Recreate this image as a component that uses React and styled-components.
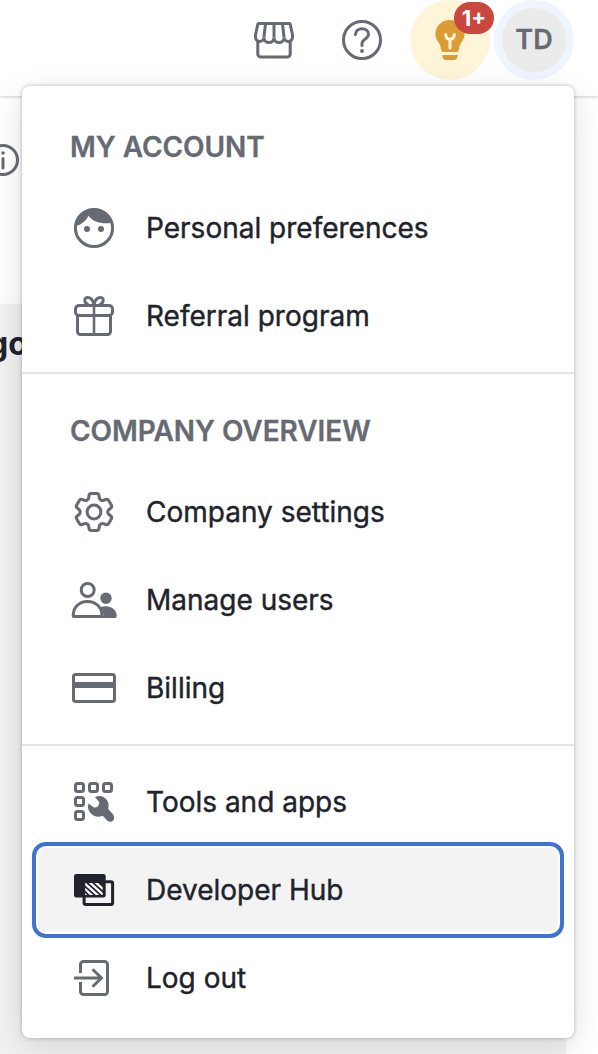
import React from 'react';
import styled, {createGlobalStyle} from 'styled-components';

const GlobalStyle = createGlobalStyle`
  body {
    margin: 0;
    overflow: hidden;
    background: #fff;
    font-family: Inter, "Liberation Sans", sans-serif;
    color: #20232c;
  }
`;

const StoreIcon = () => (
  <Icon>
    <path d="M9 7.500h30q1 0 1.300 1l2.200 10.500v2a4.200 4.200 0 0 1-8.400 0.500a5 5 0 0 1-10.100 0a5 5 0 0 1-10.100 0a4.200 4.200 0 0 1-8.400-0.500v-2L7.700 8.500q.3-1 1.300-1z"/>
    <path d="M15.500 8l-1.600 13.500M24 8v13.500M32.500 8l1.600 13.500"/>
    <path d="M7.800 25v13a3 3 0 0 0 3 3h26.400a3 3 0 0 0 3-3V25"/>
  </Icon>
);

const HelpIcon = () => (
  <Icon>
    <circle cx="24" cy="24" r="18.500"/>
    <path d="M17.500 18.500c.2-3.600 3-5.800 6.500-5.800c3.600 0 6.500 2.200 6.500 5.600c0 4.800-6.500 4.700-6.500 9.500v1.700" strokeLinecap="round"/>
    <circle cx="24" cy="35" r="1.900" fill="currentColor" stroke="none"/>
  </Icon>
);

const BulbIcon = () => (
  <Icon>
    <path
      d="M24 4C15.500 4 9.400 10.200 9.400 18.500c0 5.500 4.600 8 5.400 13.500c.3 2.300.8 4 2.200 4h14c1.400 0 1.900-1.700 2.200-4c.8-5.500 5.400-8 5.400-13.500C38.600 10.200 32.500 4 24 4z"
      fill="currentColor" stroke="none"
    />
    <path d="M16.300 39h15.400c0 3-1.500 5-4 5h-7.400c-2.500 0-4-2-4-5z" fill="currentColor" stroke="none"/>
    <path d="M19.800 18.500c0 3 1.600 4.700 4.200 4.700s4.200-1.700 4.200-4.700M24 23v9" stroke="#fef5d9" strokeWidth="3" strokeLinecap="round"/>
  </Icon>
);

const FaceIcon = () => (
  <Icon>
    <circle cx="24" cy="24" r="18.600"/>
    <path d="M5.400 22.300C11.500 20.500 16 17 18.400 11.700C23 18.300 32.500 20.300 42 18.700C39.500 10.500 33 5.400 24 5.400S5.400 12.500 5.400 22.300z" fill="currentColor" stroke="none"/>
    <circle cx="17" cy="25" r="3" fill="currentColor" stroke="none"/>
    <circle cx="31" cy="25" r="3" fill="currentColor" stroke="none"/>
  </Icon>
);

const GiftIcon = () => (
  <Icon>
    <rect x="5.500" y="13.500" width="37" height="10" rx="3.500"/>
    <path d="M7.500 24v15.500a3 3 0 0 0 3 3h27a3 3 0 0 0 3-3V24"/>
    <path d="M24 12v30" strokeWidth="2.600"/>
    <path d="M24 12.500C23 8 20.500 5.400 17.500 5.400c-2.200 0-3 1.600-2.600 3.600c.4 2.200 1.600 3 3.600 3.500M24 12.500C25 8 27.500 5.400 30.500 5.400c2.200 0 3 1.600 2.600 3.600c-.4 2.200-1.600 3-3.600 3.500"/>
  </Icon>
);

const GearIcon = () => (
  <Icon>
    <path
      transform="translate(-.6 -.6) scale(2.050)"
      strokeWidth="1.500"
      d="M9.594 3.940c.09-.542.56-.94 1.110-.94h2.593c.55 0 1.020.398 1.110.94l.213 1.281c.063.374.313.686.645.87.074.04.147.083.22.127.325.196.72.257 1.075.124l1.217-.456a1.125 1.125 0 0 1 1.370.49l1.296 2.247a1.125 1.125 0 0 1-.26 1.431l-1.003.827c-.293.241-.438.613-.43.992a7.723 7.723 0 0 1 0 .255c-.008.378.137.75.43.991l1.004.827c.424.35.534.955.26 1.430l-1.298 2.247a1.125 1.125 0 0 1-1.369.491l-1.217-.456c-.355-.133-.75-.072-1.076.124a6.470 6.470 0 0 1-.22.128c-.331.183-.581.495-.644.869l-.213 1.281c-.09.543-.56.94-1.110.94h-2.594c-.55 0-1.019-.398-1.110-.94l-.213-1.281c-.062-.374-.312-.686-.644-.87a6.520 6.520 0 0 1-.22-.127c-.325-.196-.72-.257-1.076-.124l-1.217.456a1.125 1.125 0 0 1-1.369-.49l-1.297-2.247a1.125 1.125 0 0 1 .26-1.431l1.004-.827c.292-.24.437-.613.43-.991a6.932 6.932 0 0 1 0-.255c.007-.38-.138-.751-.43-.992l-1.004-.827a1.125 1.125 0 0 1-.26-1.430l1.297-2.247a1.125 1.125 0 0 1 1.370-.491l1.216.456c.356.133.751.072 1.076-.124.072-.044.146-.086.22-.128.332-.183.582-.495.644-.869l.214-1.280Z"
    />
    <circle cx="24" cy="24" r="6.900"/>
  </Icon>
);

const UsersIcon = () => (
  <Icon>
    <circle cx="17.700" cy="14" r="6.500"/>
    <path d="M3.200 39.500C3.200 31 9.500 25.400 17.500 25.400S32 31 32 39.500q0 1.100-1 1.100H4.300q-1.100 0-1.100-1.100z"/>
    <circle cx="36" cy="22.300" r="5.700" fill="currentColor" stroke="none"/>
    <path d="M30.500 31.300C37.500 28.200 46.700 31.500 46.700 40q0 2-1.700 2H31.500q2-.5 2-3q0-4.200-3-7.700z" fill="currentColor" stroke="none"/>
  </Icon>
);

const CardIcon = () => (
  <Icon>
    <rect x="3.500" y="10.500" width="41" height="27" rx="2.300"/>
    <path d="M3 21h42" strokeWidth="6"/>
  </Icon>
);

const ToolsIcon = () => (
  <Icon>
    {[[4, 4], [18, 4], [32, 4], [4, 18], [4, 32]].map(([x, y]) => (
      <rect key={`${x}-${y}`} x={x + 1.5} y={y + 1.5} width="8" height="8" rx="2"/>
    ))}
    <path
      d="M25 19.300C29 16.600 34 18 36.700 21.800C39 25 38.700 28 38.200 31L43.200 36.500Q45 39.500 43.300 42.500Q40.500 44.800 37.800 43L32.600 37.700C28 39.800 23 38.500 20 34.500C17.800 31.500 17.500 28.500 18.600 25.500L23.500 29.300Q26 30 28 28.300Q29.700 26.500 29.200 24z"
      fill="currentColor" stroke="none"
    />
  </Icon>
);

const HubIcon = () => (
  <Icon>
    <rect x="14.100" y="15.700" width="28.500" height="22.900" rx="1.800"/>
    <rect x="4" y="8" width="31.700" height="23.500" rx="2.300" fill="currentColor" stroke="none"/>
    <svg x="15.200" y="17" width="17.500" height="12" viewBox="0 0 17.500 12">
      <path d="M-8-1l16 14.500M-2-1l16 14.500M4-1l16 14.500M10-1l16 14.500M-14-1l16 14.500" stroke="#fff" strokeWidth="2.300"/>
    </svg>
  </Icon>
);

const LogoutIcon = () => (
  <Icon>
    <path d="M10.500 19V10.500a3 3 0 0 1 3-3h21a3 3 0 0 1 3 3v27a3 3 0 0 1-3 3h-21a3 3 0 0 1-3-3V28"/>
    <path d="M4 24h27M22.500 15.200l9 8.800l-9 8.800"/>
  </Icon>
);

const sections = [
  {
    title: 'My account',
    items: [
      {label: 'Personal preferences', icon: FaceIcon},
      {label: 'Referral program', icon: GiftIcon}
    ]
  },
  {
    title: 'Company overview',
    items: [
      {label: 'Company settings', icon: GearIcon},
      {label: 'Manage users', icon: UsersIcon},
      {label: 'Billing', icon: CardIcon}
    ]
  },
  {
    items: [
      {label: 'Tools and apps', icon: ToolsIcon},
      {label: 'Developer Hub', icon: HubIcon, focused: true},
      {label: 'Log out', icon: LogoutIcon}
    ]
  }
];

export default function App() {
  return (
    <Page>
      <GlobalStyle/>
      <Header>
        <IconButton><StoreIcon/></IconButton>
        <IconButton><HelpIcon/></IconButton>
        <Tips>
          <BulbIcon/>
          <Badge>1+</Badge>
        </Tips>
        <Avatar>TD</Avatar>
      </Header>
      <Toolbar>
        <InfoIcon viewBox="0 0 32 32">
          <circle cx="16" cy="16" r="14.500"/>
          <path d="M16 14.500v9.500" strokeLinecap="round"/>
          <circle cx="16" cy="9" r="1.800" fill="currentColor" stroke="none"/>
        </InfoIcon>
      </Toolbar>
      <Content>go</Content>

      <Menu>
        {sections.map(({title, items}, i) => (
          <Section key={i}>
            {title && <Title>{title}</Title>}
            {items.map(({label, icon: ItemIcon, focused}) => (
              <Item key={label} $focused={focused}>
                <ItemIcon/>
                <Label>{label}</Label>
              </Item>
            ))}
          </Section>
        ))}
      </Menu>
    </Page>
  );
}

const Page = styled.div`
  position: relative;
  display: flex;
  flex-direction: column;
  width: 598px;
  height: 1054px;
  overflow: hidden;
`;

const Header = styled.header`
  display: flex;
  justify-content: flex-end;
  align-items: flex-start;
  box-sizing: border-box;
  height: 96px;
  flex-shrink: 0;
  padding-right: 24px;
  background: #fff;
  box-shadow: 0 1px 3px rgba(0, 0, 0, 0.2);
  z-index: 1;
`;

const Icon = styled.svg.attrs({viewBox: '0 0 48 48'})`
  display: block;
  flex-shrink: 0;
  width: 48px;
  height: 48px;
  fill: none;
  stroke: currentColor;
  stroke-width: 3;
`;

const IconButton = styled.div`
  display: flex;
  align-items: center;
  height: 80px;
  margin-right: 40px;
  color: #666a73;

  & + & {
    margin-right: 24px;
  }
`;

const Tips = styled.div`
  position: relative;
  display: flex;
  justify-content: center;
  align-items: center;
  width: 80px;
  height: 80px;
  border-radius: 50%;
  background: #fef5d9;
  color: #dc9c34;
`;

const Badge = styled.div`
  position: absolute;
  top: 2px;
  right: -4px;
  width: 40px;
  height: 32px;
  border-radius: 16px;
  background: #c8473f;
  color: #fff;
  font-size: 22px;
  font-weight: 700;
  line-height: 32px;
  text-align: center;
`;

const Avatar = styled.div`
  box-sizing: border-box;
  width: 80px;
  height: 80px;
  margin-left: 4px;
  border: 8px solid #eff4fe;
  border-radius: 50%;
  background: #ebebeb;
  color: #666a73;
  font-size: 27px;
  font-weight: 600;
  line-height: 64px;
  text-align: center;
  -webkit-text-stroke: 0.3px currentColor;
`;

const Toolbar = styled.div`
  display: flex;
  align-items: flex-start;
  box-sizing: border-box;
  height: 208px;
  flex-shrink: 0;
  padding-top: 48px;
  color: #666a73;
`;

const InfoIcon = styled.svg`
  width: 32px;
  height: 32px;
  margin-left: -13px;
  fill: none;
  stroke: currentColor;
  stroke-width: 3;
`;

const Content = styled.div`
  box-sizing: border-box;
  width: 566px;
  flex: 1;
  padding-top: 20px;
  background: #f1f1f1;
  box-shadow: 0 0 16px rgba(0, 0, 0, 0.03);
  font-size: 32px;
  font-weight: 700;
  line-height: 40px;
  text-indent: -12px;
`;

const Menu = styled.div`
  position: absolute;
  top: 86px;
  left: 22px;
  z-index: 2;
  box-sizing: border-box;
  width: 552px;
  height: 952px;
  border-radius: 8px;
  background: #fff;
  box-shadow: 0 0 4px rgba(0, 0, 0, 0.25), 0 8px 32px rgba(0, 0, 0, 0.12);
`;

const Section = styled.div`
  padding: 12px 10px;

  &:first-child {
    padding-top: 16px;
  }

  & + & {
    border-top: 2px solid #e4e4e4;
  }
`;

const Title = styled.div`
  height: 82px;
  padding-left: 38px;
  color: #666a73;
  font-size: 28px;
  font-weight: 600;
  letter-spacing: -0.06px;
  line-height: 90px;
  text-transform: uppercase;
  -webkit-text-stroke: 0.3px currentColor;
`;

const Item = styled.div`
  display: flex;
  align-items: center;
  height: 88px;
  padding-left: 38px;
  color: #666a73;

  ${({$focused}) => $focused && `
    box-sizing: border-box;
    height: 96px;
    margin: -4px 0;
    padding-left: 34px;
    border: 4px solid #4072d4;
    border-radius: 14px;
    background: #f3f3f3;
    box-shadow: inset 0 0 0 2px #fff;
    color: #20232c;
  `}
`;

const Label = styled.div`
  margin-left: 28px;
  color: #20232c;
  font-size: 28px;
  line-height: 40px;
  -webkit-text-stroke: 0.4px currentColor;
`;
